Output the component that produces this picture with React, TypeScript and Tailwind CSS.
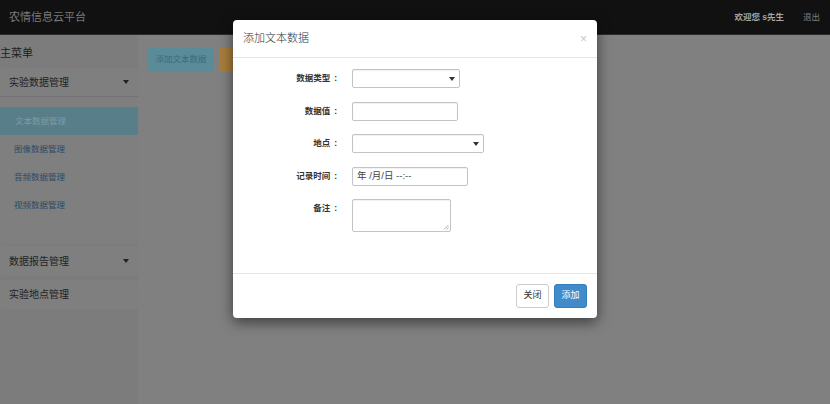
const font = "font-['Liberation_Sans','Noto_Sans_CJK_SC',sans-serif]";

function Caret({ className = "" }: { className?: string }) {
  return (
    <span
      className={`inline-block h-0 w-0 border-x-[3px] border-t-[4px] border-x-transparent ${className}`}
    />
  );
}

function FormRow({
  label,
  children,
  alignTop,
}: {
  label: string;
  children: React.ReactNode;
  alignTop?: boolean;
}) {
  return (
    <div className={`flex ${alignTop ? "items-start" : "items-center"}`}>
      <label
        className={`w-[119px] shrink-0 pr-[15px] text-right text-[8.5px] font-bold text-[#333] ${
          alignTop ? "pt-[3px]" : ""
        }`}
      >
        {label}
        <span className="ml-[4px]">:</span>
      </label>
      {children}
    </div>
  );
}

function SelectBox({ width }: { width: string }) {
  return (
    <div
      className={`flex h-[19px] ${width} items-center justify-end rounded-[2px] border border-[#c4c4c4] bg-white pr-[4px] shadow-[inset_0_1px_1px_rgba(0,0,0,0.06)]`}
    >
      <Caret className="border-t-[#333]" />
    </div>
  );
}

export default function App() {
  return (
    <div className={`relative h-[404px] w-full overflow-hidden bg-[#808080] ${font}`}>
      {/* navbar (under backdrop) */}
      <div className="flex h-[35px] items-center justify-between border-b border-[#2b2b2b] bg-[#111] pl-[9px] pr-[10px]">
        <span className="text-[11px] text-[#7a7a7a]">农情信息云平台</span>
        <div className="flex items-center gap-[19px] text-[8.5px]">
          <span className="font-semibold text-[#a6a6a6]">欢迎您 s先生</span>
          <span className="text-[#7e7e7e]">退出</span>
        </div>
      </div>

      <div className="flex h-[369px]">
        {/* sidebar */}
        <aside className="flex w-[138px] flex-col bg-[#7c7c7c]">
          <div className="pt-[11px] text-[11px] leading-[14px] text-[#1c1c1c]">主菜单</div>
          <div className="mt-[8px] rounded-[3px] bg-[#7f7f7f]">
            <div className="flex h-[29px] items-center justify-between border-b border-[#727272] pl-[9px] pr-[9px] text-[10px] text-[#222]">
              <span>实验数据管理</span>
              <Caret className="border-t-[#222]" />
            </div>
            <div className="flex h-[146px] flex-col pt-[10px] text-[8.5px]">
              <div className="flex h-[28px] items-center bg-[#587f89] pl-[15px] text-[#7c9ba5]">
                文本数据管理
              </div>
              <div className="flex h-[28px] items-center pl-[14px] text-[#2e4a66]">图像数据管理</div>
              <div className="flex h-[28px] items-center pl-[14px] text-[#2e4a66]">音频数据管理</div>
              <div className="flex h-[28px] items-center pl-[14px] text-[#2e4a66]">视频数据管理</div>
            </div>
          </div>
          <div className="mt-[3px] flex h-[30px] items-center justify-between rounded-[3px] bg-[#7f7f7f] pl-[9px] pr-[9px] text-[10px] text-[#222]">
            <span>数据报告管理</span>
            <Caret className="border-t-[#222]" />
          </div>
          <div className="mt-[4px] flex h-[29px] items-center rounded-[3px] bg-[#7f7f7f] pl-[9px] text-[10px] text-[#222]">
            实验地点管理
          </div>
        </aside>

        {/* main */}
        <main className="flex flex-1 items-start gap-[5px] pl-[10px] pt-[13px]">
          <div className="flex h-[23px] w-[66px] items-center justify-center rounded-[3px] bg-[#5a8b98] text-[8.5px] text-[#3a6b78]">
            添加文本数据
          </div>
          <div className="flex h-[23px] w-[66px] items-center justify-center rounded-[3px] bg-[#a87d3c] text-[8.5px] text-[#7a5a28]">
            搜索
          </div>
        </main>
      </div>

      {/* modal */}
      <div className="absolute left-[233px] top-[20px] flex h-[298px] w-[364px] flex-col rounded-[4px] bg-white shadow-[0_4px_14px_rgba(0,0,0,0.55)]">
        <div className="flex h-[38px] items-center justify-between border-b border-[#e5e5e5] pl-[10px] pr-[10px]">
          <span className="text-[11px] font-light text-[#333]">添加文本数据</span>
          <span className="text-[12px] leading-none text-[#c8c8c8]">×</span>
        </div>
        <div className="flex flex-1 flex-col gap-[13.5px] pt-[11px]">
          <FormRow label="数据类型">
            <SelectBox width="w-[108px]" />
          </FormRow>
          <FormRow label="数据值">
            <div className="h-[19px] w-[106px] rounded-[2px] border border-[#c4c4c4] bg-white shadow-[inset_0_1px_1px_rgba(0,0,0,0.06)]" />
          </FormRow>
          <FormRow label="地点">
            <SelectBox width="w-[132px]" />
          </FormRow>
          <FormRow label="记录时间">
            <div className="flex h-[19px] w-[116px] items-center rounded-[2px] border border-[#c4c4c4] bg-white pl-[4px] text-[9.5px] text-[#444] shadow-[inset_0_1px_1px_rgba(0,0,0,0.06)]">
              年 /月/日 --:--
            </div>
          </FormRow>
          <FormRow label="备注" alignTop>
            <div className="relative h-[33px] w-[99px] rounded-[2px] border border-[#c4c4c4] bg-white shadow-[inset_0_1px_1px_rgba(0,0,0,0.06)]">
              <svg className="absolute bottom-[1px] right-[1px]" width="6" height="6" viewBox="0 0 6 6">
                <path d="M5.5 1L1 5.5M5.5 3.5L3.5 5.5" stroke="#999" strokeWidth="0.8" />
              </svg>
            </div>
          </FormRow>
        </div>
        <div className="flex h-[45px] items-center justify-end gap-[5px] border-t border-[#e5e5e5] pr-[10px]">
          <div className="flex h-[24px] w-[33px] items-center justify-center rounded-[3px] border border-[#ccc] bg-white text-[9px] text-[#333]">
            关闭
          </div>
          <div className="flex h-[24px] w-[33px] items-center justify-center rounded-[3px] border border-[#357ebd] bg-[#428bca] text-[9px] text-white">
            添加
          </div>
        </div>
      </div>
    </div>
  );
}
